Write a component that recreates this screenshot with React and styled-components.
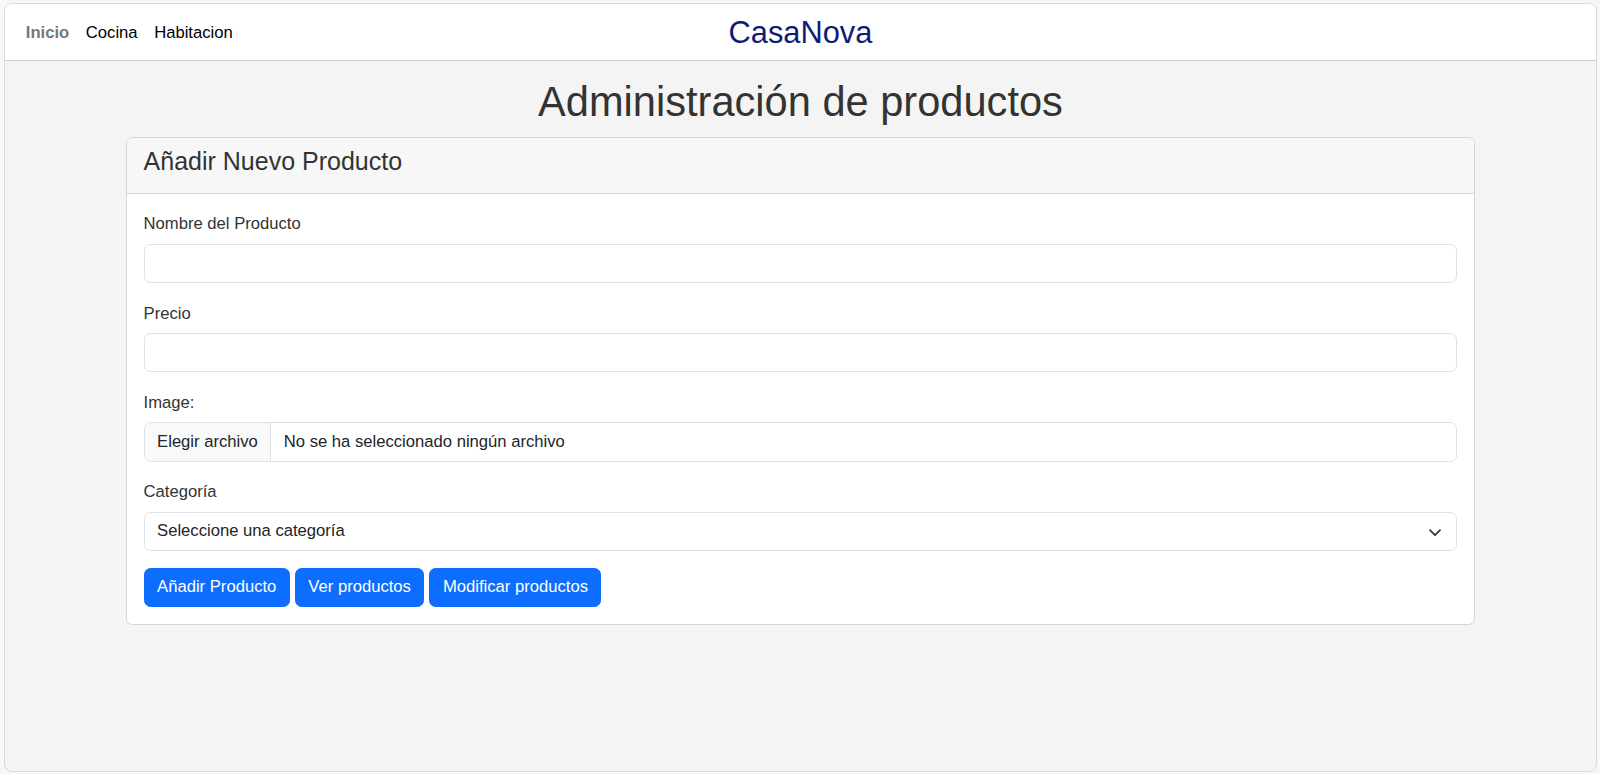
import React from 'react';
import styled, { createGlobalStyle } from 'styled-components';

const GlobalStyle = createGlobalStyle`
  * {
    box-sizing: border-box;
  }
  body {
    margin: 0;
    background: #f7f7f7;
    font-family: "Liberation Sans", Arial, sans-serif;
    font-size: 16.64px;
    line-height: 1.5;
    color: #333;
  }
`;

const Frame = styled.div`
  margin: 3px 3px 2px 4px;
  height: 769px;
  display: flex;
  flex-direction: column;
  background: #f4f4f4;
  border: 1px solid #d9d9d9;
  border-radius: 8px;
  overflow: hidden;
`;

const NavBar = styled.nav`
  display: grid;
  grid-template-columns: 1fr auto 1fr;
  align-items: center;
  height: 57px;
  padding: 3px 12.5px 0;
  background: #fff;
  border-bottom: 1px solid #cfcfcf;
`;

const NavLinks = styled.ul`
  display: flex;
  margin: 0;
  padding: 0;
  list-style: none;
`;

const NavLink = styled.a`
  display: block;
  padding: 0 8.3px;
  color: ${(p) => (p.$active ? '#777' : '#000')};
  font-weight: ${(p) => (p.$active ? 700 : 400)};
  text-decoration: none;
`;

const Brand = styled.a`
  font-size: 30.8px;
  line-height: 1.2;
  color: #0c1c78;
  text-decoration: none;
`;

const Container = styled.main`
  width: 1349px;
  margin: 0 auto;
`;

const Title = styled.h1`
  margin: 16px 0 10px;
  font-size: 41.6px;
  font-weight: 400;
  line-height: 1.2;
  text-align: center;
  color: #333;
`;

const Card = styled.section`
  background: #fff;
  border: 1px solid #d5d5d5;
  border-radius: 6.5px;
  overflow: hidden;
`;

const CardHeader = styled.header`
  padding: 8.3px 16.6px;
  background: #f7f7f7;
  border-bottom: 1px solid #d5d5d5;
`;

const CardTitle = styled.h4`
  margin: 0 0 8.3px;
  font-size: 25px;
  font-weight: 400;
  line-height: 1.2;
  color: #333;
`;

const CardBody = styled.form`
  padding: 16.6px;
`;

const Field = styled.div`
  margin-bottom: 16.6px;
`;

const Label = styled.label`
  display: block;
  padding-top: 2px;
  margin-bottom: 6.3px;
`;

const Input = styled.input`
  display: block;
  width: 100%;
  height: 39.5px;
  padding: 6.2px 12.5px;
  font: inherit;
  color: #212529;
  background: #fff;
  border: 1px solid #dee2e6;
  border-radius: 6.5px;
  outline: none;
`;

const FileBox = styled.div`
  display: flex;
  align-items: stretch;
  height: 39.5px;
  border: 1px solid #dee2e6;
  border-radius: 6.5px;
  overflow: hidden;
  color: #212529;
`;

const FileButton = styled.span`
  display: flex;
  align-items: center;
  padding: 0 12.5px;
  background: #f8f9fa;
  border-right: 1px solid #dee2e6;
`;

const FileName = styled.span`
  display: flex;
  align-items: center;
  padding: 0 12.5px;
`;

const SelectBox = styled.div`
  display: flex;
  align-items: center;
  justify-content: space-between;
  height: 39.5px;
  padding: 0 14px 0 12.5px;
  border: 1px solid #dee2e6;
  border-radius: 6.5px;
  color: #212529;
`;

const Actions = styled.div`
  display: flex;
  gap: 5px;
`;

const Button = styled.button`
  height: 39.5px;
  padding: 0 12.5px;
  font: inherit;
  color: #fff;
  background: #0d6efd;
  border: 1px solid #0d6efd;
  border-radius: 6.5px;
`;

const Chevron = () => (
  <svg width="14" height="10" viewBox="0 0 16 12" fill="none">
    <path d="m2 5 6 6 6-6" stroke="#343a40" strokeWidth="2.2" strokeLinecap="round" strokeLinejoin="round" />
  </svg>
);

export default function App() {
  return (
    <>
      <GlobalStyle />
      <Frame>
        <NavBar>
          <NavLinks>
            <li><NavLink $active href="#">Inicio</NavLink></li>
            <li><NavLink href="#">Cocina</NavLink></li>
            <li><NavLink href="#">Habitacion</NavLink></li>
          </NavLinks>
          <Brand href="#">CasaNova</Brand>
          <div />
        </NavBar>
        <Container>
          <Title>Administración de productos</Title>
          <Card>
            <CardHeader>
              <CardTitle>Añadir Nuevo Producto</CardTitle>
            </CardHeader>
            <CardBody onSubmit={(e) => e.preventDefault()}>
              <Field>
                <Label>Nombre del Producto</Label>
                <Input type="text" />
              </Field>
              <Field>
                <Label>Precio</Label>
                <Input type="text" />
              </Field>
              <Field>
                <Label>Image:</Label>
                <FileBox>
                  <FileButton>Elegir archivo</FileButton>
                  <FileName>No se ha seleccionado ningún archivo</FileName>
                </FileBox>
              </Field>
              <Field>
                <Label>Categoría</Label>
                <SelectBox>
                  <span>Seleccione una categoría</span>
                  <Chevron />
                </SelectBox>
              </Field>
              <Actions>
                <Button type="submit">Añadir Producto</Button>
                <Button type="button">Ver productos</Button>
                <Button type="button">Modificar productos</Button>
              </Actions>
            </CardBody>
          </Card>
        </Container>
      </Frame>
    </>
  );
}
